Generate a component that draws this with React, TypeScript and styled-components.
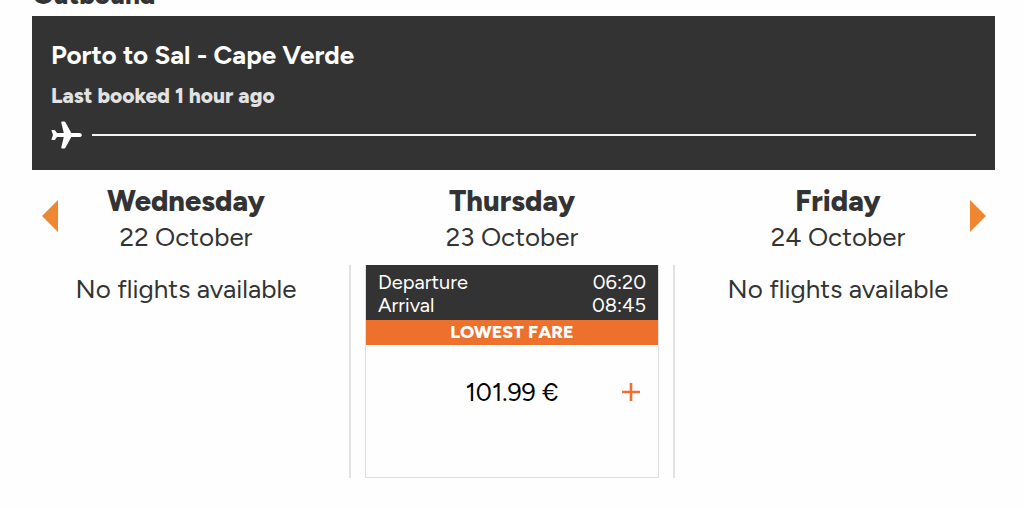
import React from "react";
import styled, { createGlobalStyle } from "styled-components";

const GlobalStyle = createGlobalStyle`
  * { box-sizing: border-box; }
  body {
    margin: 0;
    background: #fefefe;
    color: #333333;
    font-family: Figtree, Lato, "Liberation Sans", sans-serif;
    overflow: hidden;
  }
  h1, h2, h3, p, dl, dt, dd { margin: 0; }
`;

const Page = styled.main`
  overflow: hidden;
`;

const Direction = styled.h1`
  margin: -20px 33px 0;
  font-size: 26px;
  line-height: 30px;
  padding-bottom: 6px;
  font-weight: 800;
`;

const RouteBar = styled.header`
  margin: 0 29px 0 32px;
  padding: 23px 19px 20px;
  background: #333333;
  color: #ffffff;
`;

const RouteName = styled.h2`
  font-size: 26px;
  line-height: 32px;
  font-weight: 700;
`;

const LastBooked = styled.p`
  margin-top: 13px;
  font-size: 21px;
  line-height: 24px;
  font-weight: 800;
  color: #e2e2e2;
`;

const FlightLine = styled.div`
  display: flex;
  align-items: center;
  gap: 10px;
  margin-top: 12px;
  height: 30px;
`;

const Track = styled.span`
  flex: 1;
  height: 2px;
  background: #f4f4f4;
`;

const Days = styled.section`
  display: grid;
  grid-template-columns: repeat(3, 1fr);
  margin: 0 23px;
  padding-top: 13px;
`;

const Day = styled.article`
  display: flex;
  flex-direction: column;
  text-align: center;
`;

const DayHead = styled.div`
  display: grid;
  grid-template-columns: 1fr auto 1fr;
  align-items: start;
  padding-bottom: 10px;
`;

const DayTitle = styled.div`
  grid-column: 2;
`;

const Weekday = styled.h3`
  font-size: 29px;
  line-height: 36px;
  font-weight: 800;
`;

const DateText = styled.p`
  font-size: 26px;
  line-height: 36px;
`;

const Arrow = styled.button<{ $side: "left" | "right" }>`
  grid-row: 1;
  grid-column: ${(p) => (p.$side === "left" ? 1 : 3)};
  justify-self: ${(p) => (p.$side === "left" ? "start" : "end")};
  margin: ${(p) => (p.$side === "left" ? "17px 0 0 19px" : "17px 15px 0 0")};
  padding: 0;
  border: 0;
  background: none;
  color: #ef8632;
  cursor: pointer;
  svg { display: block; }
`;

const DayBody = styled.div<{ $ruled?: boolean }>`
  min-height: 213px;
  padding: 0 14px;
  border: solid ${(p) => (p.$ruled ? "#e2e2e2" : "transparent")};
  border-width: 0 2px;
`;

const NoFlights = styled.p`
  margin-top: 8px;
  font-size: 26px;
  line-height: 32px;
`;

const Fare = styled.div`
  height: 100%;
  border: 1px solid #dfdfdf;
  border-top: 0;
`;

const Times = styled.dl`
  display: grid;
  grid-template-columns: 1fr auto;
  padding: 6px 12px 3px;
  background: #333333;
  color: #ffffff;
  font-size: 20px;
  line-height: 23px;
  text-align: left;
  dd { text-align: right; }
`;

const LowestTag = styled.p`
  background: #ed702d;
  color: #ffffff;
  font-size: 18px;
  line-height: 25px;
  font-weight: 800;
`;

const PriceButton = styled.button`
  display: grid;
  grid-template-columns: 1fr auto 1fr;
  align-items: center;
  width: 100%;
  padding: 31px 18px;
  border: 0;
  background: none;
  color: #000000;
  font: inherit;
  font-size: 25px;
  line-height: 32px;
  cursor: pointer;
  span { grid-column: 2; }
  svg { justify-self: end; }
`;

function Plane() {
  return (
    <svg width="31" height="28" viewBox="0 0 31 28" fill="#fff" aria-hidden="true">
      <path d="M1 9 3 9Q3.8 9 4.2 9.6L6 12 12.8 12 10.3 1.8Q10 .5 11.3.5L13.3.5Q14 .5 14.4 1.3L20.3 12 28 12Q30.8 12 30.8 14 30.8 16 28 16L20.3 16 14.4 26.8Q14 27.5 13.3 27.5L11.3 27.5Q10 27.5 10.3 26.2L12.8 16 6 16 4.2 18.4Q3.8 19 3 19L1 19Q.3 19 .5 18.2L2 14 .5 9.8Q.3 9 1 9Z" />
    </svg>
  );
}

function ArrowButton({ side }: { side: "left" | "right" }) {
  return (
    <Arrow $side={side} type="button" aria-label={side === "left" ? "Previous days" : "Next days"}>
      <svg width="16" height="32" viewBox="0 0 16 32" fill="currentColor">
        <path d={side === "left" ? "M16 0V32L0 16Z" : "M0 0V32L16 16Z"} />
      </svg>
    </Arrow>
  );
}

type DayInfo = {
  weekday: string;
  date: string;
  arrow?: "left" | "right";
  flight?: { departure: string; arrival: string; price: string };
};

const days: DayInfo[] = [
  { weekday: "Wednesday", date: "22 October", arrow: "left" },
  {
    weekday: "Thursday",
    date: "23 October",
    flight: { departure: "06:20", arrival: "08:45", price: "101.99 €" },
  },
  { weekday: "Friday", date: "24 October", arrow: "right" },
];

export default function App() {
  return (
    <>
      <GlobalStyle />
      <Page>
        <Direction>Outbound</Direction>
        <RouteBar>
          <RouteName>Porto to Sal - Cape Verde</RouteName>
          <LastBooked>Last booked 1 hour ago</LastBooked>
          <FlightLine>
            <Plane />
            <Track />
          </FlightLine>
        </RouteBar>
        <Days>
          {days.map((day) => (
            <Day key={day.date}>
              <DayHead>
                {day.arrow && <ArrowButton side={day.arrow} />}
                <DayTitle>
                  <Weekday>{day.weekday}</Weekday>
                  <DateText>{day.date}</DateText>
                </DayTitle>
              </DayHead>
              <DayBody $ruled={Boolean(day.flight)}>
                {day.flight ? (
                  <Fare>
                    <Times>
                      <dt>Departure</dt>
                      <dd>{day.flight.departure}</dd>
                      <dt>Arrival</dt>
                      <dd>{day.flight.arrival}</dd>
                    </Times>
                    <LowestTag>LOWEST FARE</LowestTag>
                    <PriceButton type="button">
                      <span>{day.flight.price}</span>
                      <svg width="18" height="18" viewBox="0 0 18 18" aria-hidden="true">
                        <path d="M9 0V18M0 9H18" stroke="#ed702d" strokeWidth="2.6" />
                      </svg>
                    </PriceButton>
                  </Fare>
                ) : (
                  <NoFlights>No flights available</NoFlights>
                )}
              </DayBody>
            </Day>
          ))}
        </Days>
      </Page>
    </>
  );
}
